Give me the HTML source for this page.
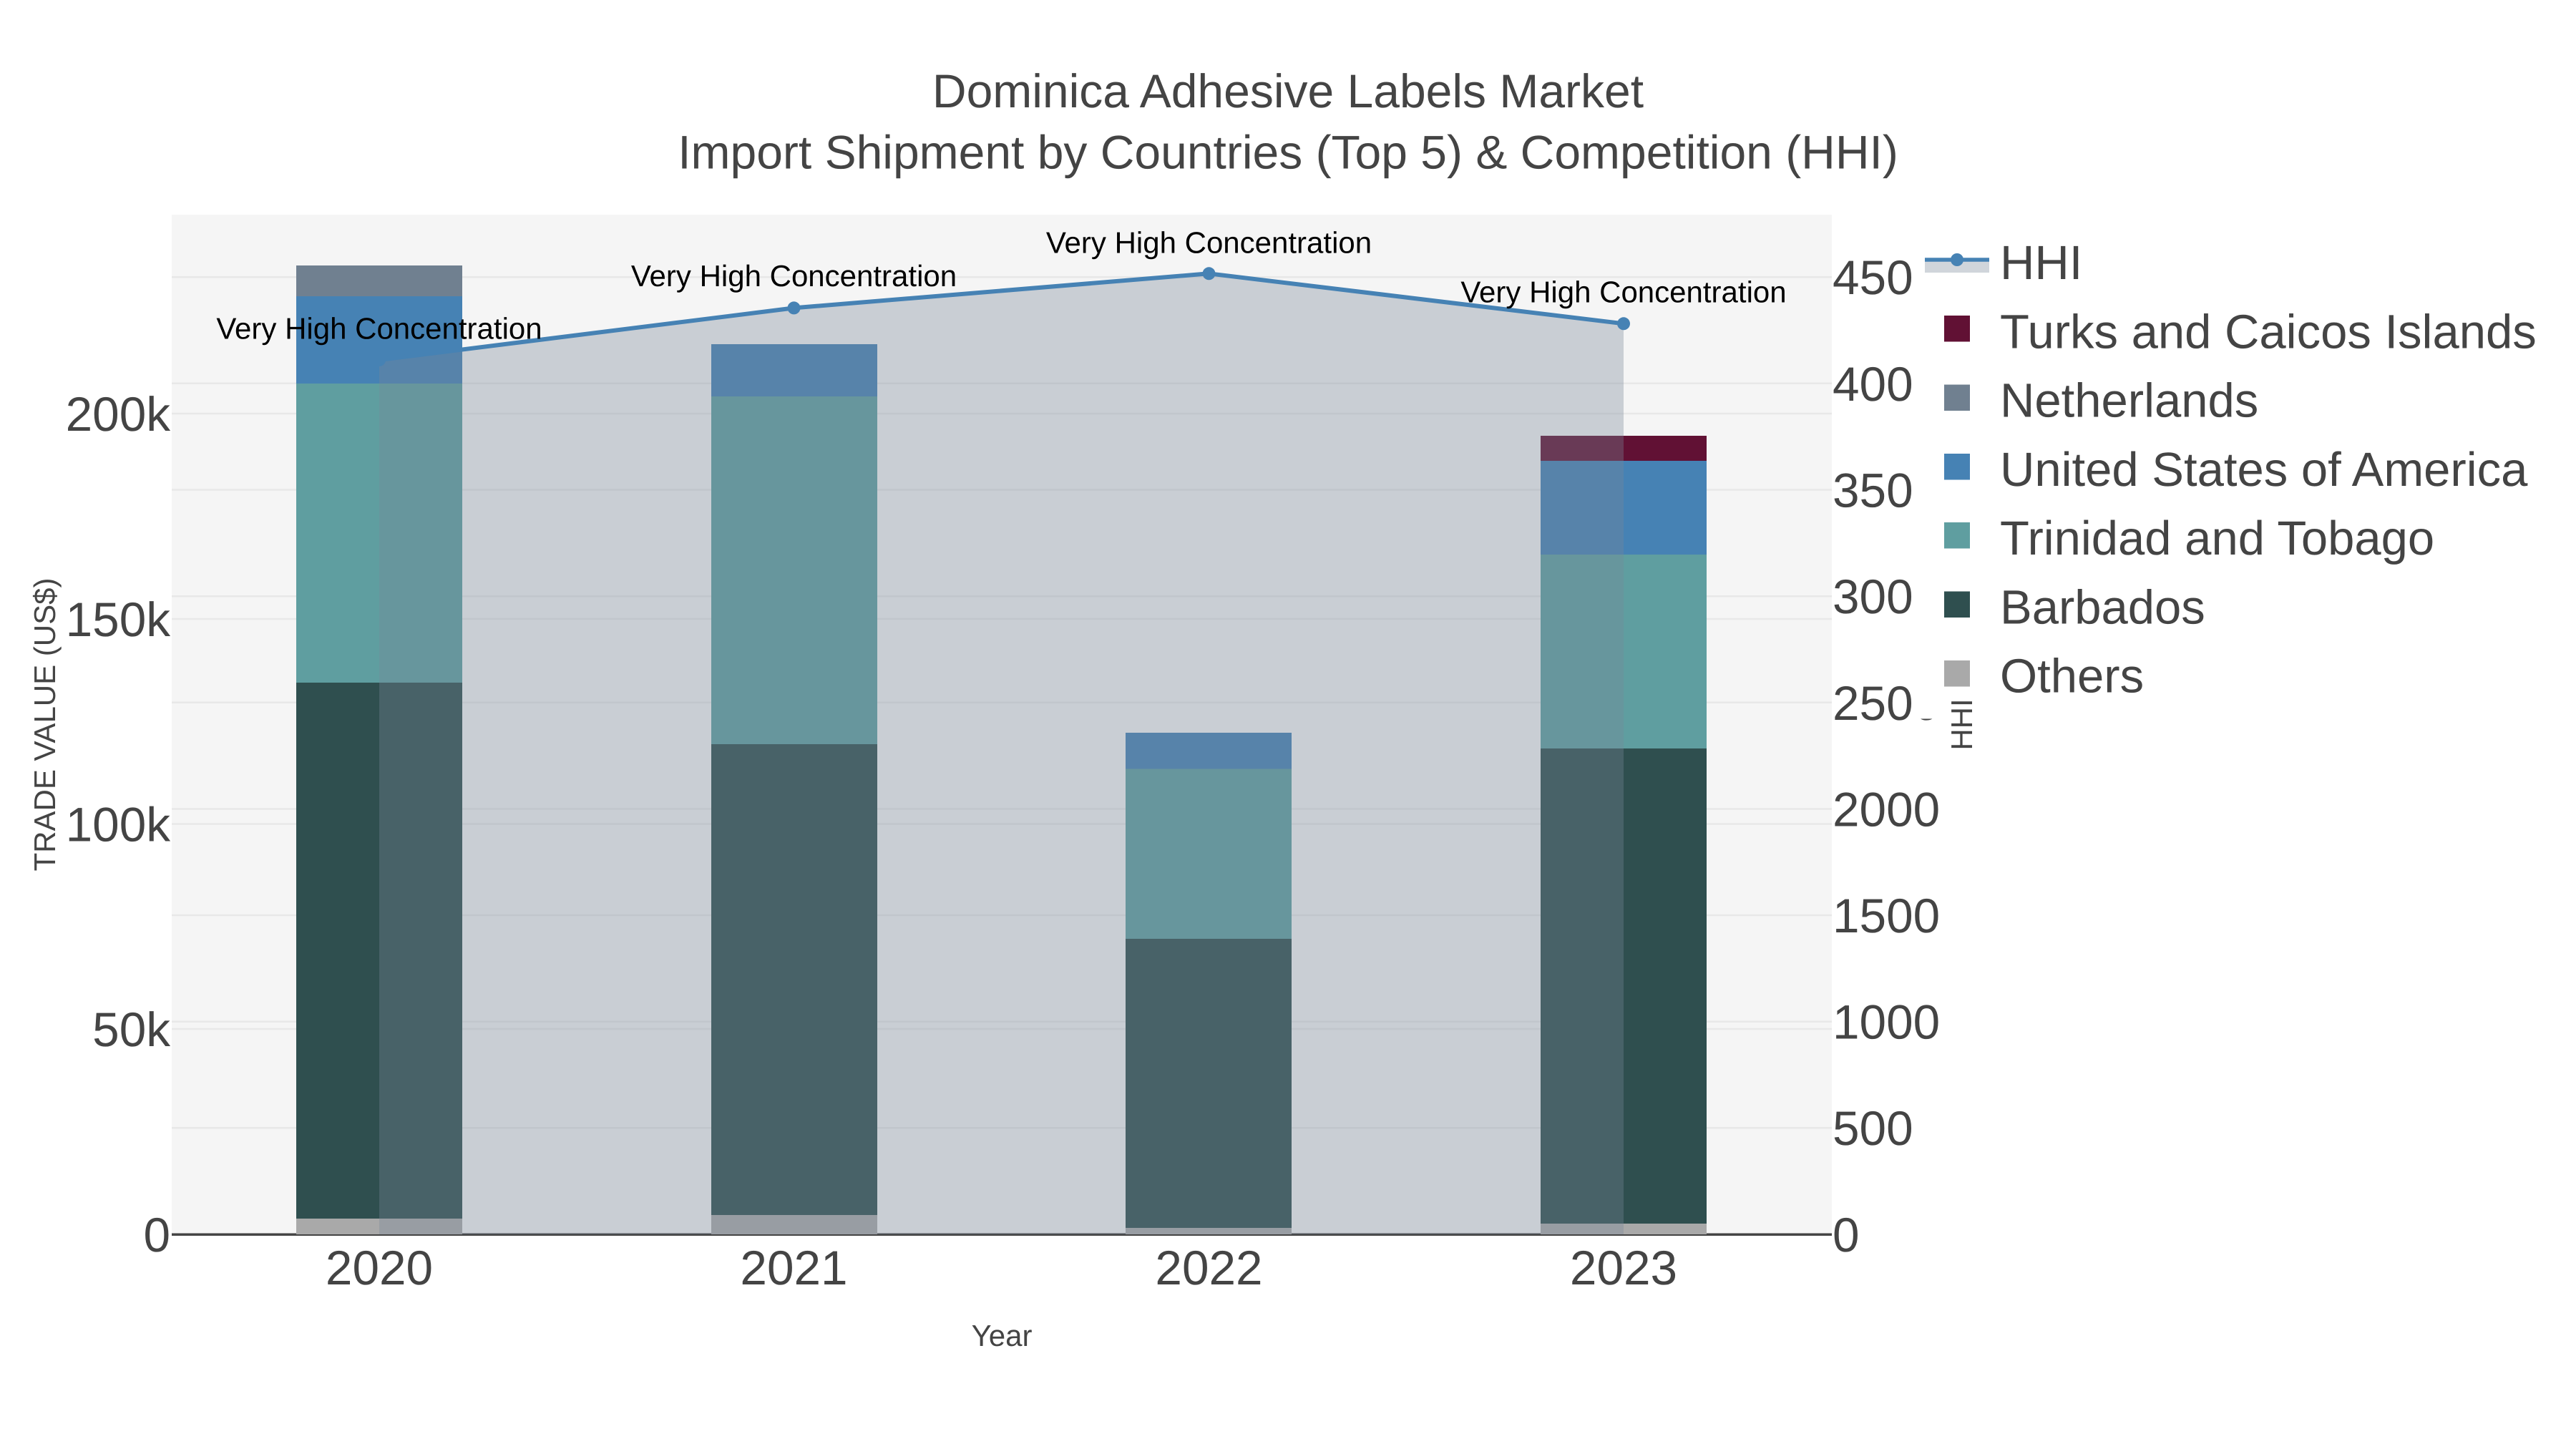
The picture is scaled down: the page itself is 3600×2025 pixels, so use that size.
<!DOCTYPE html>
<html lang="en">
<head>
<meta charset="utf-8">
<title>Dominica Adhesive Labels Market</title>
<style>
html,body{margin:0;padding:0;background:#fff;width:3600px;height:2025px;overflow:hidden}
svg{display:block;position:absolute;left:0;top:0}
text{font-family:"Liberation Sans",Arial,sans-serif;text-rendering:geometricPrecision;fill:#444}
.tick{font-size:67.5px}
.leg{font-size:67px}
.title{font-size:66px;text-anchor:middle}
.ax{font-size:42px;text-anchor:middle}
.ann{font-size:42px;text-anchor:middle;fill:#000}
</style>
</head>
<body>
<svg width="3600" height="2025" viewBox="0 0 3600 2025" xmlns="http://www.w3.org/2000/svg">
<rect width="3600" height="2025" fill="#ffffff"/>
<rect x="240" y="300" width="2320" height="1425" fill="#f5f5f5"/>

<!-- grid -->
<g stroke="#e8e8e8" stroke-width="2.5" fill="none">
<path d="M240 1438H2560M240 1151.5H2560M240 865H2560M240 578H2560"/>
<path d="M240 1576.3H2560M240 1427.7H2560M240 1279H2560M240 1130.5H2560M240 981.8H2560M240 833.2H2560M240 684.5H2560M240 535.8H2560M240 387.2H2560"/>
</g>
<rect x="240" y="1723.5" width="2320" height="3.5" fill="#444"/>

<!-- bars 2020 -->
<g>
<rect x="414" y="371" width="232" height="43" fill="#708090"/>
<rect x="414" y="414" width="232" height="122" fill="#4682b4"/>
<rect x="414" y="536" width="232" height="418" fill="#5f9ea0"/>
<rect x="414" y="954" width="232" height="749" fill="#2f4f4f"/>
<rect x="414" y="1703" width="232" height="22" fill="#a9a9a9"/>
<!-- 2021 -->
<rect x="994" y="481" width="232" height="73" fill="#4682b4"/>
<rect x="994" y="554" width="232" height="486" fill="#5f9ea0"/>
<rect x="994" y="1040" width="232" height="658" fill="#2f4f4f"/>
<rect x="994" y="1698" width="232" height="27" fill="#a9a9a9"/>
<!-- 2022 -->
<rect x="1573" y="1024" width="232" height="50.5" fill="#4682b4"/>
<rect x="1573" y="1074.5" width="232" height="237.5" fill="#5f9ea0"/>
<rect x="1573" y="1312" width="232" height="404" fill="#2f4f4f"/>
<rect x="1573" y="1716" width="232" height="9" fill="#a9a9a9"/>
<!-- 2023 -->
<rect x="2153" y="609" width="232" height="35" fill="#611134"/>
<rect x="2153" y="644" width="232" height="131" fill="#4682b4"/>
<rect x="2153" y="775" width="232" height="271" fill="#5f9ea0"/>
<rect x="2153" y="1046" width="232" height="664" fill="#2f4f4f"/>
<rect x="2153" y="1710" width="232" height="15" fill="#a9a9a9"/>
</g>

<!-- HHI area + line -->
<path d="M530 1725L530 503L1109.5 430.4L1689.5 382.3L2269 452.3L2269 1725Z" fill="#778899" fill-opacity="0.35"/>
<path d="M530 503L1109.5 430.4L1689.5 382.3L2269 452.3" fill="none" stroke="#4682b4" stroke-width="6" stroke-linejoin="round"/>
<g fill="#4682b4">
<circle cx="530" cy="503" r="9"/>
<circle cx="1109.5" cy="430.4" r="9"/>
<circle cx="1689.5" cy="382.3" r="9"/>
<circle cx="2269" cy="452.3" r="9"/>
</g>

<!-- annotations -->
<text class="ann" x="530" y="473.3">Very High Concentration</text>
<text class="ann" x="1109.5" y="400">Very High Concentration</text>
<text class="ann" x="1689.5" y="353.5">Very High Concentration</text>
<text class="ann" x="2269" y="422.7">Very High Concentration</text>

<!-- title -->
<text class="title" x="1800" y="150">Dominica Adhesive Labels Market</text>
<text class="title" x="1800" y="235.7">Import Shipment by Countries (Top 5) &amp; Competition (HHI)</text>

<!-- left ticks -->
<g class="tick" text-anchor="end">
<text x="238" y="1749">0</text>
<text x="238" y="1462">50k</text>
<text x="238" y="1175.5">100k</text>
<text x="238" y="889">150k</text>
<text x="238" y="602">200k</text>
</g>

<!-- x ticks -->
<g class="tick" text-anchor="middle">
<text x="530" y="1795">2020</text>
<text x="1109.5" y="1795">2021</text>
<text x="1689.5" y="1795">2022</text>
<text x="2269" y="1795">2023</text>
</g>

<!-- right ticks -->
<g class="tick">
<text x="2561" y="1749">0</text>
<text x="2561" y="1600">500</text>
<text x="2561" y="1451.5">1000</text>
<text x="2561" y="1303">1500</text>
<text x="2561" y="1154.5">2000</text>
<text x="2561" y="1005.8">2500</text>
<text x="2561" y="857.2">3000</text>
<text x="2561" y="708.5">3500</text>
<text x="2561" y="559.8">4000</text>
<text x="2561" y="411.2">4500</text>
</g>

<!-- axis titles -->
<text class="ax" x="1400" y="1881">Year</text>
<text class="ax" transform="translate(77 1012.5) rotate(-90)">TRADE VALUE (US$)</text>

<!-- legend -->
<rect x="2673.5" y="330" width="900" height="674.5" fill="#ffffff"/>
<text class="ax" transform="translate(2756 1012.5) rotate(-90)">HHI</text>
<rect x="2690" y="363" width="90" height="18" fill="#778899" fill-opacity="0.35"/>
<path d="M2690 363H2780" stroke="#4682b4" stroke-width="5.5" fill="none"/>
<circle cx="2735" cy="363" r="9" fill="#4682b4"/>
<rect x="2717" y="441" width="36" height="36.5" fill="#611134"/>
<rect x="2717" y="537.5" width="36" height="36.5" fill="#708090"/>
<rect x="2717" y="634" width="36" height="36.5" fill="#4682b4"/>
<rect x="2717" y="730" width="36" height="36.5" fill="#5f9ea0"/>
<rect x="2717" y="826.5" width="36" height="36.5" fill="#2f4f4f"/>
<rect x="2717" y="923" width="36" height="36.5" fill="#a9a9a9"/>
<g class="leg">
<text x="2795" y="390">HHI</text>
<text x="2795" y="486.5">Turks and Caicos Islands</text>
<text x="2795" y="582.7">Netherlands</text>
<text x="2795" y="679">United States of America</text>
<text x="2795" y="775.2">Trinidad and Tobago</text>
<text x="2795" y="871.5">Barbados</text>
<text x="2795" y="967.7">Others</text>
</g>
</svg>
</body>
</html>
